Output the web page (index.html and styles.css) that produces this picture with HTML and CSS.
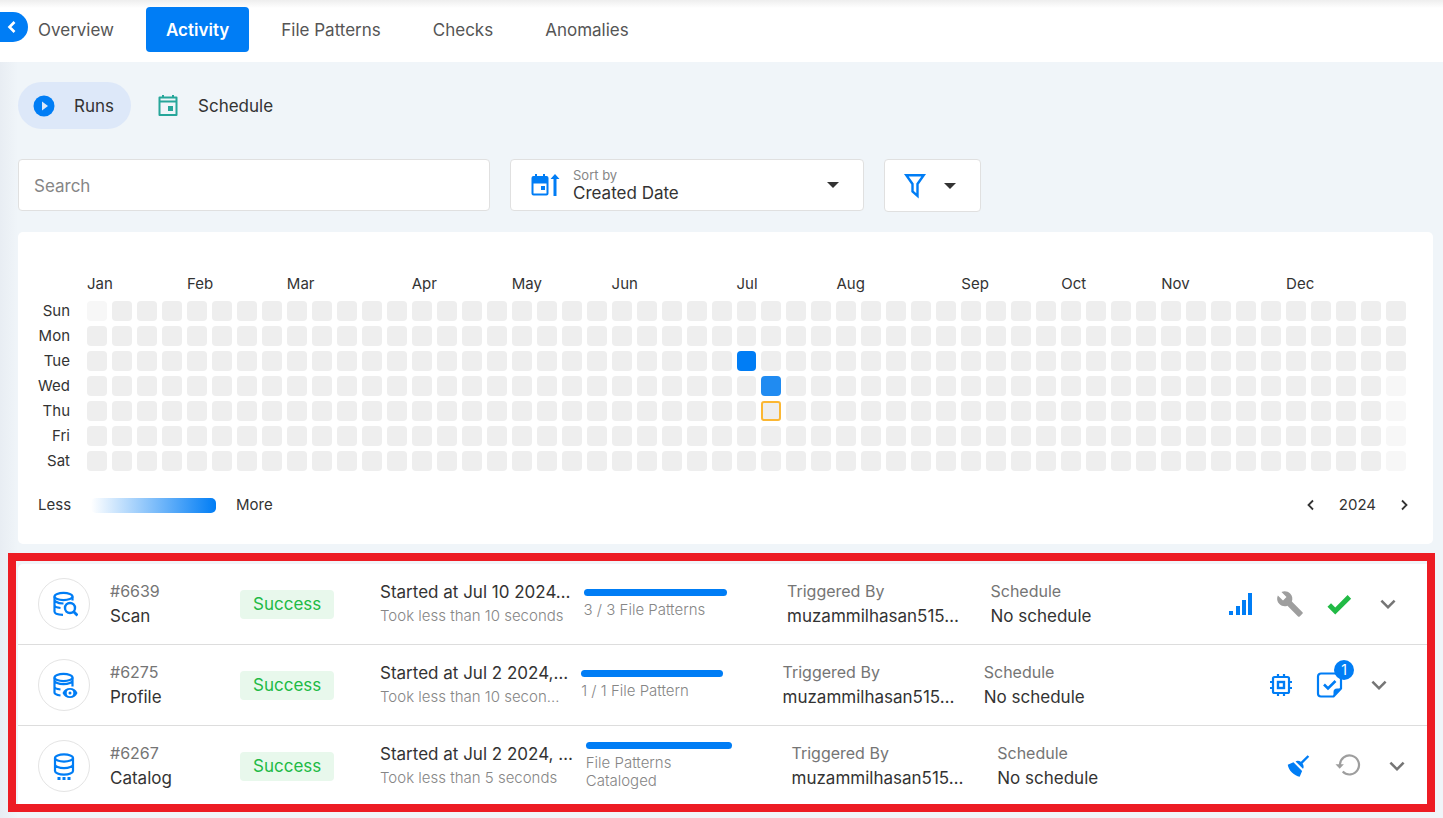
FILE: index.html
```html
<!DOCTYPE html>
<html lang="en">
<head>
<meta charset="utf-8">
<title>Activity</title>
<link rel="stylesheet" href="styles.css">
</head>
<body>
<header class="topbar">
  <button class="drawer-toggle" type="button" aria-label="Open sidebar">
    <svg width="24" height="24" viewBox="0 0 24 24"><path d="M14.5 7 9.500 12l5 5" fill="none" stroke="currentColor" stroke-width="2.600"/></svg>
  </button>
  <nav class="tabs">
    <a class="tab" href="#">Overview</a>
    <a class="tab tab-active" href="#">Activity</a>
    <a class="tab" href="#">File Patterns</a>
    <a class="tab" href="#">Checks</a>
    <a class="tab" href="#">Anomalies</a>
  </nav>
</header>

<main class="page">
  <nav class="subtabs">
    <a class="subtab subtab-active" href="#">
      <svg class="icon-blue" width="24" height="24" viewBox="0 0 24 24"><circle cx="12" cy="12" r="10.500" fill="currentColor"/><path d="M10 7.500v9l6-4.500z" fill="#dde8f9"/></svg>
      Runs
    </a>
    <a class="subtab" href="#">
      <svg class="icon-teal" width="24" height="24" viewBox="0 0 24 24"><path d="M3.500 3.500h17v17.500h-17zM3.500 7.500h17" fill="none" stroke="currentColor" stroke-width="2" stroke-linejoin="round"/><path d="M6 1h2v3H6zM16 1h2v3h-2zM12 12h5v5h-5z" fill="currentColor"/></svg>
      Schedule
    </a>
  </nav>

  <div class="filters">
    <input class="search" type="search" placeholder="Search" aria-label="Search">
    <div class="sort">
      <svg class="icon-blue" width="32" height="26" viewBox="0 0 32 26"><path fill="currentColor" fill-rule="evenodd" d="M4 4H6V2h2v2h6V2h2v2h1.500a2 2 0 0 1 2 2v15.500a2 2 0 0 1-2 2h-13a2 2 0 0 1-2-2V6a2 2 0 0 1 2-2zM4.500 11.500v10h13v-10zM12 14h4v4h-4zM26 2l4.500 5h-3v17h-3V7h-3z"/></svg>
      <div class="sort-field">
        <label class="sort-label" for="sort">Sort by</label>
        <select class="sort-select" id="sort"><option>Created Date</option><option>Duration</option></select>
      </div>
      <svg class="caret" width="12" height="6" viewBox="0 0 12 6"><path d="M0 0h12L6 6z" fill="currentColor"/></svg>
    </div>
    <button class="filter" type="button" aria-label="Filter">
      <svg class="icon-blue" width="24" height="26" viewBox="0 0 24 26"><path d="M3.300 2.200h17.400L14.500 11v11.800l-5-4.300V11z" fill="none" stroke="currentColor" stroke-width="2.400"/></svg>
      <svg width="12" height="6" viewBox="0 0 12 6"><path d="M0 0h12L6 6z" fill="currentColor"/></svg>
    </button>
  </div>

  <section class="card calendar">
    <div class="heatmap" id="heatmap"></div>
    <div class="calendar-foot">
      <span>Less</span>
      <span class="scale"></span>
      <span>More</span>
      <div class="year">
        <button class="year-step" type="button" aria-label="Previous year"><svg width="14" height="14" viewBox="0 0 14 14"><path d="M9 2.500 4.500 7 9 11.500" fill="none" stroke="currentColor" stroke-width="1.800"/></svg></button>
        <span>2024</span>
        <button class="year-step" type="button" aria-label="Next year"><svg width="14" height="14" viewBox="0 0 14 14"><path d="M5 2.500 9.500 7 5 11.500" fill="none" stroke="currentColor" stroke-width="1.800"/></svg></button>
      </div>
    </div>
  </section>
</main>

<section class="highlight">
  <div class="runs">
    <article class="run run-scan">
      <div class="run-icon">
        <svg width="28" height="28" viewBox="0 0 28 28" fill="none" stroke="currentColor" stroke-width="2.200"><ellipse cx="13.500" cy="6.500" rx="9" ry="3.600"/><path d="M4.500 6.500v15c0 1.800 3.500 3.200 8.500 3.400M22.500 6.500v4M4.500 15c0 1.500 2 2.600 6 3M4.500 10c0 0 1 3.500 9 3.500"/><circle cx="20" cy="18" r="5" stroke-width="2.400"/><path d="m23.500 21.500 4 4" stroke-width="2.800"/></svg>
      </div>
      <div class="run-name"><div class="caption">#6639</div><div class="value">Scan</div></div>
      <div><span class="badge">Success</span></div>
      <div class="run-time"><div class="value">Started at Jul 10 2024…</div><div class="note">Took less than 10 seconds</div></div>
      <div class="run-progress"><div class="bar"></div><div class="note">3 / 3 File Patterns</div></div>
      <div><div class="caption">Triggered By</div><div class="value">muzammilhasan515…</div></div>
      <div><div class="caption">Schedule</div><div class="value">No schedule</div></div>
      <div class="actions">
        <button class="action icon-blue" type="button" aria-label="Metrics"><svg width="24" height="24" viewBox="0 0 24 24"><path fill="currentColor" d="M0 19h4v4H0zM7 14h4v9H7zM13 8h4v15h-4zM19 1h4v22h-4z"/></svg></button>
        <button class="action icon-grey" type="button" aria-label="Settings"><svg width="28" height="28" viewBox="0 0 24 24"><path fill="currentColor" d="M22.700 19l-9.100-9.100c.9-2.300.4-5-1.500-6.900-2-2-5-2.400-7.400-1.300L9 6 6 9 1.600 4.700C.4 7.100.9 10.100 2.900 12.100c1.900 1.900 4.600 2.400 6.900 1.500l9.100 9.100c.4.4 1 .4 1.400 0l2.300-2.300c.5-.4.5-1.100.1-1.400z"/></svg></button>
        <button class="action icon-green" type="button" aria-label="Passed"><svg width="30" height="30" viewBox="0 0 24 24"><path fill="currentColor" d="M9 20.420 2.790 14.210l2.830-2.830L9 14.770l9.880-9.890 2.830 2.830z"/></svg></button>
        <button class="action icon-dim" type="button" aria-label="Expand"><svg width="30" height="30" viewBox="0 0 24 24"><path fill="currentColor" d="M7.410 8.580 12 13.170l4.590-4.590L18 10l-6 6-6-6z"/></svg></button>
      </div>
    </article>

    <article class="run run-profile">
      <div class="run-icon">
        <svg width="28" height="28" viewBox="0 0 28 28" fill="none" stroke="currentColor" stroke-width="2.200"><ellipse cx="13.500" cy="6.500" rx="9" ry="3.600"/><path d="M4.500 6.500v15c0 1.300 1.800 2.400 6 3M22.500 6.500v9M4.500 15.500c0 1.500 2 2.600 6 3M4.500 9.500c0 2 4 3.700 9 3.700s9-1.700 9-3.700"/><path fill="currentColor" stroke="none" fill-rule="evenodd" d="M12.500 22c1.500-3.400 4-5 7.500-5s6 1.600 7.500 5c-1.500 3.400-4 5-7.500 5s-6-1.600-7.500-5zM20 18.700a3.300 3.300 0 1 0 0 6.600 3.300 3.300 0 0 0 0-6.600zM20 20.500a1.500 1.500 0 1 1 0 3 1.500 1.500 0 0 1 0-3z"/></svg>
      </div>
      <div class="run-name"><div class="caption">#6275</div><div class="value">Profile</div></div>
      <div><span class="badge">Success</span></div>
      <div class="run-time"><div class="value">Started at Jul 2 2024,…</div><div class="note">Took less than 10 secon…</div></div>
      <div class="run-progress"><div class="bar"></div><div class="note">1 / 1 File Pattern</div></div>
      <div><div class="caption">Triggered By</div><div class="value">muzammilhasan515…</div></div>
      <div><div class="caption">Schedule</div><div class="value">No schedule</div></div>
      <div class="actions">
        <button class="action icon-blue" type="button" aria-label="Profile details"><svg width="24" height="24" viewBox="0 0 24 24" fill="none" stroke="currentColor" stroke-width="2.200"><rect x="4" y="4" width="16" height="16" rx="1.500"/><rect x="9" y="9" width="6" height="6" stroke-width="2.400"/><path d="M9 1v3M15 1v3M9 20v3M15 20v3M1 9h3M1 15h3M20 9h3M20 15h3"/></svg></button>
        <button class="action icon-blue" type="button" aria-label="Checks, 1 new"><svg width="28" height="28" viewBox="0 0 28 28" fill="none" stroke="currentColor" stroke-width="2.200"><path d="M25 17.500V5.500a3 3 0 0 0-3-3H5a3 3 0 0 0-3 3v17a3 3 0 0 0 3 3h12.500z" stroke-linejoin="round"/><path d="M17.500 25.500v-4.500a3.500 3.500 0 0 1 3.500-3.500h4z" fill="currentColor" stroke="none"/><path d="m8 13.500 4 4 7.500-7.500" stroke-width="2.600"/></svg><span class="count">1</span></button>
        <button class="action icon-dim" type="button" aria-label="Expand"><svg width="30" height="30" viewBox="0 0 24 24"><path fill="currentColor" d="M7.410 8.580 12 13.170l4.590-4.590L18 10l-6 6-6-6z"/></svg></button>
      </div>
    </article>

    <article class="run run-catalog">
      <div class="run-icon">
        <svg width="28" height="28" viewBox="0 0 28 28" fill="none" stroke="currentColor" stroke-width="2.200"><ellipse cx="14" cy="6" rx="9" ry="3.600"/><path d="M5 6v13c0 2 4 3.700 9 3.700s9-1.700 9-3.700V6M5 12.500c0 2 4 3.700 9 3.700s9-1.700 9-3.700"/><path d="M7.500 26.500h3M12.500 26.500h3M17.500 26.500h3" stroke-width="2.800"/></svg>
      </div>
      <div class="run-name"><div class="caption">#6267</div><div class="value">Catalog</div></div>
      <div><span class="badge">Success</span></div>
      <div class="run-time"><div class="value">Started at Jul 2 2024, …</div><div class="note">Took less than 5 seconds</div></div>
      <div class="run-progress"><div class="bar"></div><div class="note">File Patterns Cataloged</div></div>
      <div><div class="caption">Triggered By</div><div class="value">muzammilhasan515…</div></div>
      <div><div class="caption">Schedule</div><div class="value">No schedule</div></div>
      <div class="actions">
        <button class="action icon-blue" type="button" aria-label="Prune"><svg width="28" height="28" viewBox="0 0 24 24"><path fill="currentColor" d="M19.360 2.720l1.420 1.420-5.720 5.710c1.070 1.540 1.220 3.390.32 4.590L9.060 8.120c1.200-.9 3.050-.75 4.590.32zM5.930 17.570c-2.010-2.010-3.240-4.410-3.580-6.650l4.880-2.090 7.440 7.440-2.090 4.880c-2.240-.34-4.640-1.570-6.650-3.580z"/></svg></button>
        <button class="action icon-grey" type="button" aria-label="Recreate"><svg width="28" height="28" viewBox="0 0 28 28"><path d="M6 13a9.500 9.500 0 1 1 2.700 6.600" fill="none" stroke="currentColor" stroke-width="2.200"/><path d="M1.500 12.200h8.400l-4.200 4.600z" fill="currentColor"/></svg></button>
        <button class="action icon-dim" type="button" aria-label="Expand"><svg width="30" height="30" viewBox="0 0 24 24"><path fill="currentColor" d="M7.410 8.580 12 13.170l4.590-4.590L18 10l-6 6-6-6z"/></svg></button>
      </div>
    </article>
  </div>
</section>
<script src="heatmap.js"></script>
</body>
</html>
```

FILE: styles.css
```css
* { box-sizing: border-box; }
body {
  margin: 0;
  min-height: 100vh;
  background: linear-gradient(90deg, #e8edf3, #f0f5f9 18px);
  color: #333;
  font-family: Inter, "Noto Sans", sans-serif;
  font-size: 17px;
}
a { color: inherit; text-decoration: none; }
button, input, select { font: inherit; color: inherit; }
button { padding: 0; border: 0; background: none; cursor: pointer; }
svg { display: block; flex: none; }

.icon-blue { color: #007df5; }
.icon-teal { color: #26a69a; }
.icon-grey { color: #9e9e9e; }
.icon-green { color: #21ba45; }
.icon-dim { color: #757575; }

.topbar {
  position: relative;
  padding: 7px 18px 10px;
  background: linear-gradient(#eeeeee, #ffffff 8px);
}
.drawer-toggle {
  position: absolute;
  left: 0;
  top: 12px;
  width: 28px;
  height: 30px;
  border-radius: 0 15px 15px 0;
  background: #007df5;
  color: #fff;
}
.tabs { display: flex; gap: 12px; }
.tab {
  padding: 2px 20px 0;
  line-height: 43px;
  color: #555;
}
.tab-active {
  border-radius: 4px;
  background: #007df5;
  color: #fff;
  font-weight: 600;
}

.page { padding: 20px 10px 9px 18px; }
.subtabs { display: flex; gap: 11px; margin-bottom: 30px; }
.subtab {
  display: flex;
  align-items: center;
  gap: 18px;
  padding: 1px 17px 0 14px;
  border-radius: 24px;
  line-height: 46px;
}
.subtab-active { background: #dde8f9; }

.filters { display: flex; gap: 20px; align-items: flex-start; margin-bottom: 20px; }
.search, .sort, .filter {
  height: 52px;
  border: 1px solid #e0e0e0;
  border-radius: 4px;
  background: #fff;
}
.search { flex: 0 1 472px; min-width: 0; padding: 2px 15px 0; outline: 0; }
.search::placeholder { color: #868686; opacity: 1; }
.sort {
  display: flex;
  align-items: center;
  flex: 0 1 354px;
  gap: 12px;
  padding: 0 24px 0 18px;
}
.sort-field { display: flex; flex: 1; flex-direction: column; }
.sort-label { color: #868686; font-size: 13px; line-height: 16px; }
.sort-select {
  width: 100%;
  padding: 0;
  border: 0;
  background: none;
  appearance: none;
  line-height: 20px;
}
.filter {
  display: flex;
  align-items: center;
  gap: 17px;
  width: 97px;
  height: 53px;
  padding-left: 18px;
}

.card { border-radius: 5px; background: #fff; }
.calendar { padding: 40px 20px 28px; font-size: 15px; }
.heatmap {
  display: grid;
  grid-template-columns: 44px repeat(53, 1fr);
  grid-template-rows: 24px repeat(7, 20px);
  gap: 5px;
  margin-right: 7px;
  line-height: 20px;
}
.month { grid-row: 1; line-height: 24px; width: 0; }
.day { grid-column: 1; padding-right: 12px; text-align: right; line-height: 19px; }
.cell { border-radius: 4px; background: #eee; }
.cell-out { background: #f7f7f7; }
.cell-high { background: #007df5; }
.cell-mid { background: #208bf1; }
.cell-today { border: 2px solid #fbb733; border-radius: 3px; }
.calendar-foot {
  display: flex;
  align-items: center;
  gap: 20px;
  margin-top: 23px;
  line-height: 22px;
}
.scale {
  width: 125px;
  height: 15px;
  border-radius: 5px;
  background: linear-gradient(90deg, #fff, #007df5);
}
.year { display: flex; align-items: center; gap: 21px; margin: 0 2px 0 auto; }

.highlight {
  margin: 0 8px 6px;
  padding: 3px 0 0 2px;
  border: 8px solid #ed1c24;
  overflow: hidden;
}
.runs { border-radius: 5px 0 0 0; background: #fff; }
.run {
  display: grid;
  grid-template-columns: 72px 130px 140px repeat(4, minmax(0, 1fr)) 214px;
  align-items: center;
  padding: 14px 19px 14px 20px;
}
.run + .run { border-top: 1px solid #ddd; }
.run-profile { padding-right: 28px; }
.run-catalog { padding-right: 10px; margin-bottom: -2px; }
.run-icon {
  display: grid;
  place-items: center;
  width: 52px;
  height: 52px;
  border: 1px solid #e4e4e4;
  border-radius: 50%;
  color: #007df5;
}
.caption { color: #757575; font-size: 16px; line-height: 24px; white-space: nowrap; }
.value { line-height: 26px; white-space: nowrap; }
.note { color: #868686; font-size: 15px; font-weight: 300; line-height: 18px; }
.run-time { padding-bottom: 2px; }
.run-time .note { line-height: 22px; white-space: nowrap; }
.run-progress { padding-right: 60px; }
.bar { height: 7px; margin-bottom: 5px; border-radius: 4px; background: #007df5; }
.badge {
  display: inline-block;
  padding: 0 13px;
  border-radius: 4px;
  background: #e8f8ec;
  color: #21ba45;
  line-height: 29px;
}
.actions { display: flex; justify-content: flex-end; gap: 9px; }
.action {
  position: relative;
  display: grid;
  place-items: center;
  width: 40px;
  height: 40px;
}
.count {
  position: absolute;
  top: -5px;
  right: -4px;
  width: 20px;
  border-radius: 10px;
  background: #007df5;
  color: #fff;
  font-size: 14px;
  line-height: 20px;
}
```

FILE: heatmap.js
```js
const heatmap = document.getElementById('heatmap');
const months = { Jan: 0, Feb: 4, Mar: 8, Apr: 13, May: 17, Jun: 21, Jul: 26, Aug: 30, Sep: 35, Oct: 39, Nov: 43, Dec: 48 };
const days = ['Sun', 'Mon', 'Tue', 'Wed', 'Thu', 'Fri', 'Sat'];
const marks = { '26-2': 'cell-high', '27-3': 'cell-mid', '27-4': 'cell-today' };

function add(className, column, row, text) {
  const el = document.createElement('div');
  el.className = className;
  el.style.gridColumn = column;
  el.style.gridRow = row;
  if (text) el.textContent = text;
  heatmap.append(el);
}

for (const [name, week] of Object.entries(months)) add('month', week + 2, 1, name);
days.forEach((name, day) => {
  add('day', 1, day + 2, name);
  for (let week = 0; week < 53; week++) {
    const outside = (week === 0 && day === 0) || (week === 52 && day > 2);
    const mark = outside ? 'cell-out' : marks[week + '-' + day] || '';
    add(('cell ' + mark).trim(), week + 2, day + 2);
  }
});
```
